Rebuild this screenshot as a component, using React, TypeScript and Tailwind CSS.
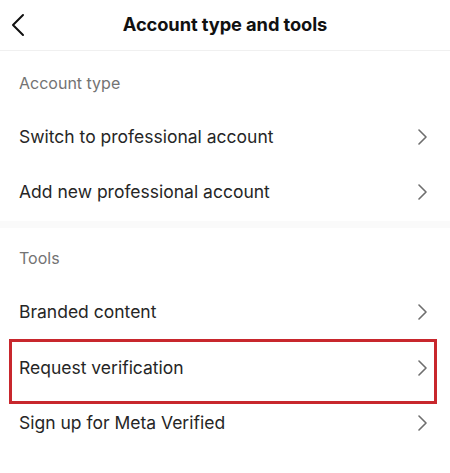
import React from "react";

function Chevron() {
  return (
    <svg width="12" height="16" viewBox="0 0 12 16" fill="none" className="shrink-0">
      <path d="M2 1 L9 8 L2 15" stroke="#6e6e6e" strokeWidth="1.6" strokeLinecap="round" strokeLinejoin="round" />
    </svg>
  );
}

function Row({ label, h, boxed }: { label: string; h: string; boxed?: boolean }) {
  return (
    <div className={`relative flex items-center justify-between pl-[19px] pr-[21px] ${h}`}>
      <span className="text-[17.5px] leading-6 text-[#262626]">{label}</span>
      <Chevron />
      {boxed && (
        <div className="absolute left-[9px] right-[13px] top-[-1px] bottom-[-9px] border-[3px] border-[#c8272d]" />
      )}
    </div>
  );
}

export default function App() {
  return (
    <div className="w-[450px] h-[473px] bg-white overflow-hidden font-['Inter',sans-serif]">
      <header className="grid grid-cols-[60px_1fr_60px] items-center h-[51px] border-b border-[#f0f0f0]">
        <div className="pl-[10px] flex items-center">
          <svg width="16" height="24" viewBox="0 0 16 24" fill="none">
            <path d="M13 2 L3 12 L13 22" stroke="#111" strokeWidth="2" strokeLinecap="round" strokeLinejoin="round" />
          </svg>
        </div>
        <h1 className="text-center text-[18.3px] font-bold text-[#111] tracking-[-0.1px]">Account type and tools</h1>
        <div />
      </header>
      <div className="pt-[20px] pb-[14px] pl-[19px]">
        <span className="block text-[16px] leading-6 text-[#737373]">Account type</span>
      </div>
      <Row label="Switch to professional account" h="h-[55px]" />
      <Row label="Add new professional account" h="h-[55px]" />
      <div className="mt-[2px] h-[7px] bg-[#fafafa]" />
      <div className="pt-[18px] pb-[14px] pl-[19px]">
        <span className="block text-[16px] leading-6 text-[#737373]">Tools</span>
      </div>
      <Row label="Branded content" h="h-[56px]" />
      <Row label="Request verification" h="h-[55px]" boxed />
      <Row label="Sign up for Meta Verified" h="h-[55px]" />
    </div>
  );
}
